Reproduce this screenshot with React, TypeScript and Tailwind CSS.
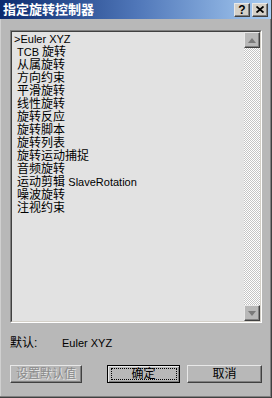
import React from 'react';

const items: [string, string?][] = [
  ['TCB ', '旋转'],
  ['', '从属旋转'],
  ['', '方向约束'],
  ['', '平滑旋转'],
  ['', '线性旋转'],
  ['', '旋转反应'],
  ['', '旋转脚本'],
  ['', '旋转列表'],
  ['', '旋转运动捕捉'],
  ['', '音频旋转'],
  ['', '运动剪辑 '],
  ['', '噪波旋转'],
  ['', '注视约束'],
];

const raised =
  'border border-t-[#e8e8e8] border-l-[#e8e8e8] border-r-[#404040] border-b-[#404040] shadow-[inset_-1px_-1px_0_#808080]';

const Arrow: React.FC<{ up?: boolean }> = ({ up }) => (
  <div className={`w-[16px] h-[16px] bg-[#b8b8b8] flex items-center justify-center ${raised}`}>
    <svg width="8" height="5" viewBox="0 0 8 5">
      <polygon points={up ? '0,5 8,5 4,0' : '0,0 8,0 4,5'} fill="#7a7a7a" />
    </svg>
  </div>
);

const Btn: React.FC<{ w: string; children: React.ReactNode; def?: boolean; disabled?: boolean }> = ({
  w,
  children,
  def,
  disabled,
}) => (
  <div
    className={`${w} h-[18px] bg-[#b8b8b8] flex items-center justify-center text-[12px] ${
      def
        ? 'border border-black shadow-[inset_1px_1px_0_#e8e8e8,inset_-1px_-1px_0_#808080]'
        : 'border border-t-[#e8e8e8] border-l-[#e8e8e8] border-r-[#404040] border-b-[#404040] shadow-[inset_-1px_-1px_0_#808080]'
    } ${disabled ? 'text-[#8a8a8a] [text-shadow:1px_1px_0_#e8e8e8]' : 'text-black'}`}
  >
    {def ? (
      <div className="w-[66px] h-[12px] border border-dotted border-black flex items-center justify-center leading-[12px]">
        {children}
      </div>
    ) : (
      <span className="leading-[13px]">{children}</span>
    )}
  </div>
);

export default function App() {
  return (
    <div
      className="w-[272px] h-[398px] bg-[#b8b8b8] flex flex-col border-r border-b border-r-[#404040] border-b-[#404040] shadow-[inset_-1px_-1px_0_#808080,inset_1px_0_0_#d0d0d0]"
      style={{ fontFamily: '"Liberation Sans", "Noto Sans CJK SC", sans-serif' }}
    >
      <div className="h-[19px] shrink-0 bg-linear-to-r from-[#0c2a6e] via-[#4f76b8] to-[#a8ccf2] flex items-center pl-[3px] pr-[3px]">
        <span className="text-white font-bold text-[13px] leading-[15px] flex-1">指定旋转控制器</span>
        <div className={`w-[16px] h-[14px] bg-[#d4d0c8] flex items-center justify-center ${raised}`}>
          <span className="text-[12px] font-bold leading-[12px] text-black">?</span>
        </div>
        <div className={`w-[16px] h-[14px] ml-[2px] bg-[#d4d0c8] flex items-center justify-center ${raised}`}>
          <svg width="8" height="7" viewBox="0 0 8 7">
            <path d="M0.5 0.5 L7.5 6.5 M7.5 0.5 L0.5 6.5" stroke="black" strokeWidth="1.8" />
          </svg>
        </div>
      </div>

      <div className="flex flex-col pl-[10px] pt-[11px]">
        <div className="w-[252px] h-[293px] border border-t-[#808080] border-l-[#808080] border-r-white border-b-white">
          <div className="h-full flex border border-t-[#404040] border-l-[#404040] border-r-[#d4d0c8] border-b-[#d4d0c8] bg-[#e2e2e2]">
            <div className="flex-1 pt-[1px] text-[12px] leading-[13px] text-black">
              <div className="pl-[2px]">
                <span className="text-[11px]">&gt;Euler XYZ</span>
              </div>
              {items.map(([lat, cjk], i) => (
                <div key={i} className="pl-[5px] whitespace-pre">
                  {lat && <span className="text-[11px]">{lat}</span>}
                  {cjk}
                  {i === 10 && <span className="text-[11px]">SlaveRotation</span>}
                </div>
              ))}
            </div>
            <div className="w-[16px] flex flex-col bg-[repeating-conic-gradient(#ffffff_0_25%,#c4c4c4_0_50%)] [background-size:2px_2px]">
              <Arrow up />
              <div className="flex-1" />
              <Arrow />
            </div>
          </div>
        </div>

        <div className="flex items-center mt-[14px] h-[13px] text-[12px] leading-[13px] text-black">
          <span className="w-[52px] pl-[0px]">默认:</span>
          <span className="text-[11px]">Euler XYZ</span>
        </div>

        <div className="flex mt-[15px]">
          <Btn w="w-[72px]" disabled>
            设置默认值
          </Btn>
          <div className="ml-[25px]">
            <Btn w="w-[73px]" def>
              确定
            </Btn>
          </div>
          <div className="ml-[7px]">
            <Btn w="w-[75px]">取消</Btn>
          </div>
        </div>
      </div>
    </div>
  );
}
